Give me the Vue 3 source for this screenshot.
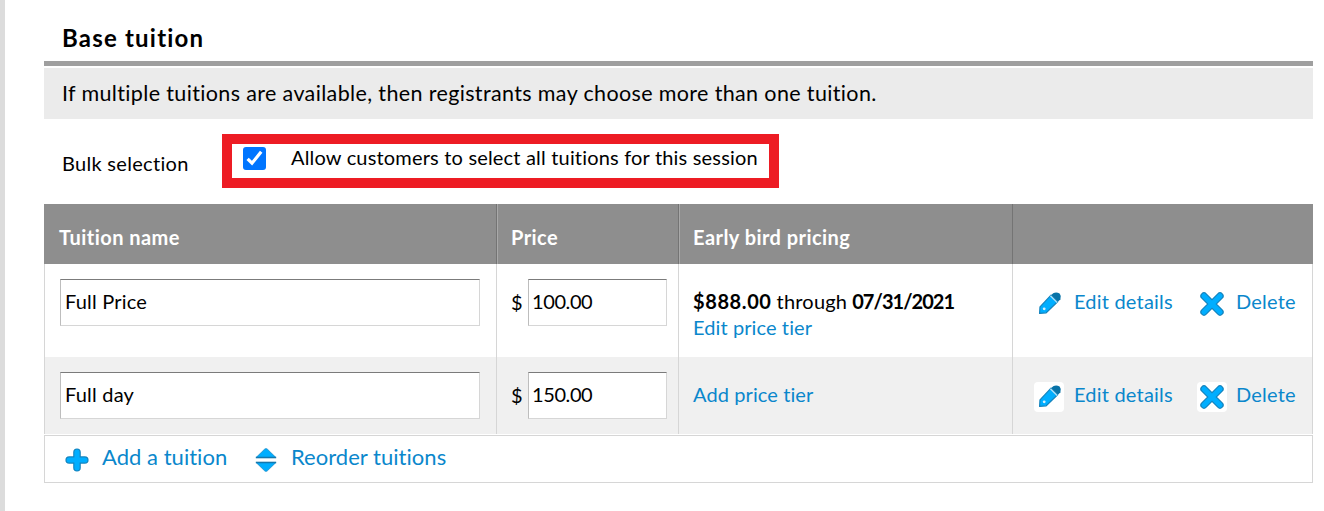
<template>
    <div class="page">
        <div class="panel">
            <h2 class="title">Base tuition</h2>
            <p class="notice">If multiple tuitions are available, then registrants may choose more than one tuition.</p>
            <div class="bulk">
                <span class="bulk-label">Bulk selection</span>
                <label class="bulk-option">
                    <input v-model="allowAll" class="hidden-check" type="checkbox">
                    <svg class="check" viewBox="0 0 23 23">
                        <rect width="23" height="23" rx="3" fill="#0075ff" />
                        <path v-if="allowAll" d="M4.6 11.8 L9 16.2 L18.2 4.8" fill="none" stroke="#fff" stroke-width="3.2" />
                    </svg>
                    <span class="bulk-text">Allow customers to select all tuitions for this session</span>
                </label>
            </div>

            <div class="row head">
                <div class="cell">Tuition name</div>
                <div class="cell">Price</div>
                <div class="cell">Early bird pricing</div>
                <div class="cell"></div>
            </div>
            <div v-for="(tuition, index) in tuitions" :key="index" class="row item">
                <div class="cell">
                    <input v-model="tuition.name" class="field" type="text">
                </div>
                <div class="cell price">
                    <span class="dollar">$</span>
                    <input v-model="tuition.price" class="field amount" type="text">
                </div>
                <div class="cell tier">
                    <div v-if="tuition.early" class="early">
                        <b>{{ tuition.early.price }}</b>
                        <span>through</span>
                        <b class="date">{{ tuition.early.until }}</b>
                    </div>
                    <a class="link">{{ tuition.early ? 'Edit' : 'Add' }} price tier</a>
                </div>
                <div class="cell actions">
                    <a class="link action edit">
                        <svg class="icon" viewBox="0 0 30 30">
                            <path d="M5.6 24.4 L6 17.8 L17 6.2 L23.6 12.8 L12.2 23.8 Z" fill="#00aeff" stroke="#1584be" stroke-width="1.2" stroke-linejoin="round" />
                            <path d="M17.2 6 L19.6 4 Q22.6 2.6 25.6 4.6 Q27.8 7.4 26.4 10.2 L24 12.8 Z" fill="#0873a8" />
                            <path d="M16.4 6.8 L23.2 13.6" stroke="#b5e3f8" stroke-width="1.3" />
                            <circle cx="10.2" cy="19.8" r="1.4" fill="#d5effb" />
                        </svg>
                        <span>Edit details</span>
                    </a>
                    <a class="link action remove">
                        <svg class="icon" viewBox="0 0 30 30">
                            <path d="M7 7 L23 23 M23 7 L7 23" stroke="#1584be" stroke-width="7.4" stroke-linecap="round" />
                            <path d="M7 7 L23 23 M23 7 L7 23" stroke="#00aeff" stroke-width="5" stroke-linecap="round" />
                        </svg>
                        <span>Delete</span>
                    </a>
                </div>
            </div>
            <div class="footer">
                <a class="link action add">
                    <svg class="icon" viewBox="0 0 30 30">
                        <path d="M15 7.2 V22.8 M7.2 15 H22.8" stroke="#1584be" stroke-width="7.6" stroke-linecap="round" />
                        <path d="M15 7.2 V22.8 M7.2 15 H22.8" stroke="#00aeff" stroke-width="5.2" stroke-linecap="round" />
                    </svg>
                    <span>Add a tuition</span>
                </a>
                <a class="link action reorder">
                    <svg class="icon" viewBox="0 0 30 30">
                        <path d="M5 12.6 L13.6 4.2 Q15 3 16.4 4.2 L25 12.6 Z" fill="#00aeff" stroke="#1584be" stroke-width=".7" />
                        <path d="M5 17.4 L13.6 25.8 Q15 27 16.4 25.8 L25 17.4 Z" fill="#00aeff" stroke="#1584be" stroke-width=".7" />
                        <path d="M4.8 12.4 H25.2 M4.8 17.6 H25.2" stroke="#1478ae" stroke-width="1.5" />
                    </svg>
                    <span>Reorder tuitions</span>
                </a>
            </div>
        </div>
    </div>
</template>

<script setup>
    import { ref } from 'vue';

    const allowAll = ref(true);
    const tuitions = ref([
        { name: 'Full Price', price: '100.00', early: { price: '$888.00', until: '07/31/2021' } },
        { name: 'Full day', price: '150.00', early: null },
    ]);
</script>

<style>
    body {
        margin: 0;
        background: #fff;
    }
</style>

<style scoped>
    .page {
        box-sizing: border-box;
        height: 511px;
        padding-left: 39px;
        border-left: 5px solid #dcdcdc;
        font-family: Lato, sans-serif;
        font-size: 20px;
        font-variant-ligatures: none;
        letter-spacing: 0.2px;
        color: #000;
    }

    .panel {
        width: 1269px;
    }

    .title {
        box-sizing: border-box;
        height: 66px;
        margin: 0;
        padding: 23px 18px 0;
        border-bottom: 5px solid #9f9f9f;
        font-size: 24px;
        line-height: 30px;
        letter-spacing: 1.2px;
    }

    .notice {
        box-sizing: border-box;
        height: 51px;
        margin: 2px 0 0;
        padding: 0 18px;
        background: #ebebeb;
        font-size: 21.5px;
        line-height: 51px;
        letter-spacing: 0.36px;
    }

    .bulk {
        display: flex;
        height: 85px;
    }

    .bulk-label {
        width: 160px;
        padding: 31px 0 0 18px;
        line-height: 26px;
        letter-spacing: 0.3px;
    }

    .bulk-option {
        box-sizing: border-box;
        display: flex;
        width: 557px;
        height: 54px;
        margin-top: 15px;
        padding: 2px 0 0 11px;
        border: 10px solid #ed1c24;
    }

    .hidden-check {
        display: none;
    }

    .check {
        width: 23px;
        height: 23px;
        margin: 1px 25px 0 0;
    }

    .bulk-text {
        line-height: 22px;
        letter-spacing: 0.18px;
        white-space: nowrap;
    }

    .row {
        display: grid;
        grid-template-columns: 453px 182px 334px 300px;
    }

    .cell {
        box-sizing: border-box;
        padding: 15px 14px 0;
        border-right: 1px solid #d6d6d6;
    }

    .cell:first-child {
        padding-left: 15px;
    }

    .head {
        height: 60px;
        background: #8e8e8e;
        color: #fff;
        font-weight: bold;
        line-height: 36px;
        letter-spacing: 0.45px;
    }

    .head .cell {
        border-right-color: #747474;
    }

    .head .cell:last-child {
        border-right: none;
    }

    .head .cell:nth-child(2),
    .head .cell:nth-child(3) {
        box-shadow: inset 1px 0 #a9a9a9;
    }

    .item {
        height: 93px;
    }

    .item + .item {
        height: 77px;
        background: #f0f0f0;
    }

    .item .cell:first-child {
        border-left: 1px solid #d6d6d6;
    }

    .field {
        box-sizing: border-box;
        width: 420px;
        height: 47px;
        padding: 0 4px 3px;
        border: 1px solid #d6d6d6;
        border-top-color: #7b7b7b;
        border-left-color: #bdbdbd;
        background: #fff;
        font: inherit;
        letter-spacing: inherit;
        color: inherit;
        outline: none;
    }

    .price {
        display: flex;
    }

    .dollar {
        flex: none;
        width: 17px;
        line-height: 46px;
    }

    .amount {
        flex: none;
        width: 139px;
        padding: 0 3px 3px;
        letter-spacing: -0.4px;
    }

    .tier {
        padding-top: 24px;
        line-height: 26px;
    }

    .tier > .link {
        letter-spacing: 0.1px;
    }

    .early {
        display: flex;
        gap: 5px;
        white-space: nowrap;
    }

    .early b {
        letter-spacing: 0.6px;
    }

    .early .date {
        letter-spacing: -0.95px;
    }

    .link {
        color: #0a87cc;
        cursor: pointer;
    }

    .actions {
        display: flex;
        padding: 25px 0 0 21px;
    }

    .action {
        display: flex;
        line-height: 24px;
        white-space: nowrap;
    }

    .icon {
        flex: none;
        width: 30px;
        height: 30px;
        margin-right: 10px;
        border-radius: 4px;
        background: #fff;
        fill: none;
    }

    .edit {
        width: 163px;
    }

    .remove .icon {
        margin-right: 9px;
    }

    .footer {
        box-sizing: border-box;
        display: flex;
        height: 48px;
        margin-top: 1px;
        padding: 9px 17px 0;
        border: 1px solid #d6d6d6;
        font-size: 22px;
        letter-spacing: 0.03px;
    }

    .footer .action {
        line-height: 24px;
    }

    .add {
        width: 189px;
    }
</style>
